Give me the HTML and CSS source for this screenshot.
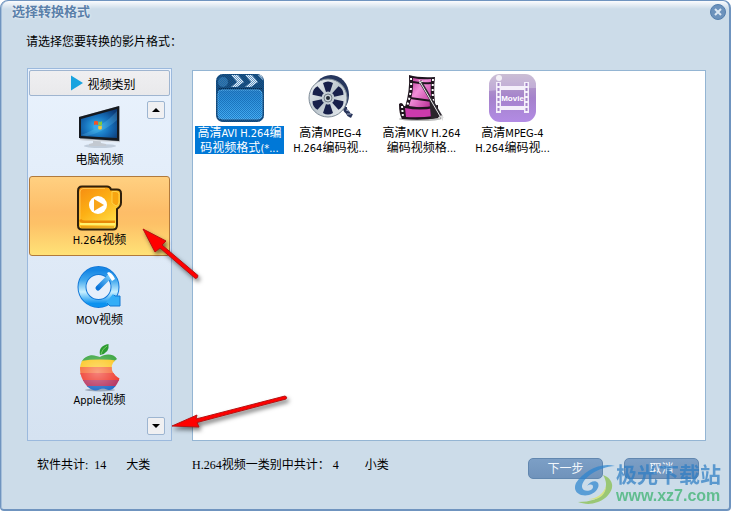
FILE: index.html
```html
<!DOCTYPE html>
<html lang="zh-CN">
<head>
    <meta charset="UTF-8">
    <meta name="viewport" content="width=device-width, initial-scale=1.0">
    <title>选择转换格式</title>
    <link rel="stylesheet" href="styles.css">
</head>
<body>
<div class="window">
    <header class="titlebar">
        <h1>选择转换格式</h1>
        <button class="close" type="button" aria-label="关闭">
            <svg width="16" height="16" viewBox="0 0 16 16"><circle cx="8" cy="8" r="7.5" fill="#6c92bc" stroke="#557fae"/><path d="M5 5l6 6M11 5l-6 6" stroke="#dbe7f3" stroke-width="2"/></svg>
        </button>
    </header>

    <p class="prompt">请选择您要转换的影片格式：</p>

    <main class="content">
        <!-- Kategori video -->
        <nav class="sidebar">
            <button class="sidebar-head" type="button">
                <svg width="12" height="16" viewBox="0 0 12 16"><path d="M0 0.500L12 8L0 15.500z" fill="#18a3df"/></svg>
                视频类别
            </button>
            <button class="category" type="button">
                <svg width="48" height="48" viewBox="0 0 48 48">
                    <defs>
                        <radialGradient id="screen" cx=".45" cy=".6" r=".7"><stop offset="0" stop-color="#35b5ee"/><stop offset=".5" stop-color="#1772bd"/><stop offset="1" stop-color="#0b3975"/></radialGradient>
                    </defs>
                    <ellipse cx="24" cy="42" rx="16" ry="2" fill="#8d9bad" opacity=".4"/>
                    <path d="M17 34h7l1 5 5 1v2H13v-2l4-1z" fill="#c3c9d1"/>
                    <path d="M3 13L43 2l1 .5V38L4 36z" fill="#9ba2ab"/>
                    <path d="M3 13L43 2V37L3 34z" fill="#15191f"/>
                    <path d="M5 15L41 5v29L5 32z" fill="url(#screen)"/>
                    <path d="M5 31c14-5 26-13 36-24v9C31 25 20 30 11 32z" fill="#7fdcff" opacity=".2"/>
                    <path d="M18 17.500q2-1.500 4 0v3.500q-2-1-4 0z" fill="#f0542a"/>
                    <path d="M22.500 17.500q2 1 3.500-.5v4q-2 1-3.500 0z" fill="#83c83c"/>
                    <path d="M17.500 21.500q2-1 4 0v3.500q-2-1-4 0z" fill="#39a5ef"/>
                    <path d="M22.300 21.700q2 1 3.500-.2v3.500q-2 1-3.500 0z" fill="#fbc933"/>
                    <path d="M4 35.500l40 2.500" stroke="#dfe3e8"/>
                </svg>
                <span>电脑视频</span>
            </button>
            <button class="category selected" type="button">
                <svg width="48" height="48" viewBox="0 0 48 48">
                    <defs>
                        <linearGradient id="folder" x2=".7" y2="1"><stop offset="0" stop-color="#f58a12"/><stop offset=".5" stop-color="#fdb014"/><stop offset="1" stop-color="#ffe04a"/></linearGradient>
                    </defs>
                    <path d="M6 2.500h25q3 0 4 3h6q4 0 4 4v9q0 4-4 6.500v16q0 4.500-4 4.500H6q-4 0-4-4V7q0-4.500 4-4.500z" fill="url(#folder)" stroke="#30200b" stroke-width="2"/>
                    <path d="M36 7.500h4q3 0 3 3v7.500q0 3-3 4l-4-3z" fill="#f7a511" stroke="#fed24a"/>
                    <path d="M4 36q2 2 5 2h30" fill="none" stroke="#e88a08" stroke-width="3"/>
                    <path d="M4 39h35v2H4z" fill="#fff06d"/>
                    <path d="M5 43h33" stroke="#dc8205"/>
                    <path d="M4 35V8q0-3 3-3.500h22" fill="none" stroke="#ffc34c"/>
                    <circle cx="22" cy="21" r="9" fill="#fff"/>
                    <path d="M18 15v12l10-6z" fill="#f9a61a"/>
                </svg>
                <span><span class="latin">H.264</span>视频</span>
            </button>
            <button class="category" type="button">
                <svg width="48" height="48" viewBox="0 0 48 48">
                    <defs>
                        <linearGradient id="quick" x2="0" y2="1"><stop offset="0" stop-color="#1687e5"/><stop offset=".3" stop-color="#43a9ee"/><stop offset=".65" stop-color="#c8f0ff"/><stop offset="1" stop-color="#0b92ef"/></linearGradient>
                        <linearGradient id="hand" x1="0" y1="1" x2="1" y2="0"><stop offset="0" stop-color="#0873d9"/><stop offset="1" stop-color="#6cc2f7"/></linearGradient>
                    </defs>
                    <circle cx="22.500" cy="23" r="16.500" fill="#e6effb" stroke="#1177d8" stroke-width="9"/>
                    <circle cx="22.500" cy="23" r="16.500" fill="none" stroke="url(#quick)" stroke-width="7"/>
                    <path d="M33 35l4-5 2 2h5v10H34l-4-3z" fill="#34aef7"/>
                    <path d="M38 31l1 1h5v10H34l-3-3" fill="none" stroke="#1479d2"/>
                    <path d="M22 24L33 13" stroke="url(#hand)" stroke-width="5" stroke-linecap="round"/>
                    <path d="M31 9l5 8 3-2q-2-5-6-7z" fill="#fff"/>
                </svg>
                <span><span class="latin">MOV</span>视频</span>
            </button>
            <button class="category" type="button">
                <svg width="48" height="48" viewBox="0 0 48 48">
                    <defs>
                        <clipPath id="fruit"><path d="M24 13c5-3.500 14-3.500 17 2-8 5-7 14 2.500 19.500-3 8-7 12-11 11.500-4-1-6-2-10 0-6 2-13-3-17-13C2 24 5 13 14 11.500c4-.7 7 1 10 1.500z"/></clipPath>
                        <radialGradient id="gloss" cx=".45" cy=".5" r=".6"><stop offset="0" stop-color="#fff" stop-opacity=".4"/><stop offset="1" stop-color="#fff" stop-opacity="0"/></radialGradient>
                    </defs>
                    <ellipse cx="24" cy="46" rx="15" ry="1.500" fill="#5e6b82" opacity=".5"/>
                    <g clip-path="url(#fruit)">
                        <path d="M0 8h48v10H0z" fill="#36a33c"/>
                        <path d="M0 17.500q24-4 48 0v8H0z" fill="#fcc51b"/>
                        <path d="M0 23h48v8H0z" fill="#f6602a"/>
                        <path d="M0 29h48v8H0z" fill="#ee3022"/>
                        <path d="M0 36h48v7H0z" fill="#b32b58"/>
                        <path d="M0 42h48v6H0z" fill="#1864c4"/>
                        <path d="M0 8h48v40H0z" fill="url(#gloss)"/>
                    </g>
                    <path d="M24 11Q22 2 32.500 0Q34 9 24 11z" fill="#2c9b32"/>
                    <path d="M25 10q1-5 6-8" fill="none" stroke="#77ca64"/>
                </svg>
                <span><span class="latin">Apple</span>视频</span>
            </button>
            <button class="scroll scroll-up" type="button" aria-label="向上"><svg width="8" height="4" viewBox="0 0 8 4"><path d="M0 4h8L4 0z"/></svg></button>
            <button class="scroll scroll-down" type="button" aria-label="向下"><svg width="8" height="4" viewBox="0 0 8 4"><path d="M0 0h8L4 4z"/></svg></button>
        </nav>

        <!-- Daftar format -->
        <section class="formats">
            <button class="format selected" type="button">
                <svg width="50" height="50" viewBox="0 0 50 50">
                    <defs>
                        <linearGradient id="clap" x2="0" y2="1"><stop offset="0" stop-color="#2e86cc"/><stop offset=".3" stop-color="#2d8fd8"/><stop offset="1" stop-color="#46b0f5"/></linearGradient>
                        <pattern id="dots" width="2" height="2" patternUnits="userSpaceOnUse"><path d="M0 0h1v1H0zM1 1h1v1H1z" fill="#0b5ea8" opacity=".6"/></pattern>
                        <clipPath id="clapbar"><rect x="2" y="1" width="46" height="15" rx="6"/></clipPath>
                    </defs>
                    <rect x="1" y="1" width="48" height="48" rx="7" fill="#1a466f"/>
                    <rect x="3" y="17" width="44" height="29" rx="4" fill="url(#clap)" stroke="#5db4ed"/>
                    <g clip-path="url(#clapbar)" fill="#e4eef6">
                        <path d="M16 2h7l6 7-7 5h-6l6-5zM30 2h7l6 7-7 5h-6l6-5zM43 2h5v5z"/>
                        <circle cx="8" cy="9" r="5" fill="#3a77a8"/>
                    </g>
                    <path d="M3 15.500h44" stroke="#0b2b49"/>
                    <rect x="1" y="1" width="48" height="48" rx="7" fill="url(#dots)"/>
                </svg>
                <span class="name">高清<span class="latin">AVI H.264</span>编<br>码视频格式<span class="latin">(*...</span></span>
            </button>
            <button class="format" type="button">
                <svg width="50" height="50" viewBox="0 0 50 50">
                    <defs>
                        <linearGradient id="reel" x2="1" y2="1"><stop offset="0" stop-color="#f4f7f9"/><stop offset=".5" stop-color="#bcc6cd"/><stop offset="1" stop-color="#eef2f5"/></linearGradient>
                    </defs>
                    <path d="M39 34c0 6 2 3 3 6s2 2 4 3" fill="none" stroke="#28345a" stroke-width="4"/>
                    <path d="M40 37l3 1M41 41l4 0" stroke="#9aa6c0"/>
                    <ellipse cx="25" cy="22" rx="18" ry="20" fill="#26365d"/>
                    <circle cx="22" cy="25" r="19" fill="url(#reel)" stroke="#7d8a96"/>
                    <g fill="#18204a">
                        <path id="hole" d="M17 10q5-3 10 0l-3 9q-2-1-4 0z"/>
                        <use href="#hole" transform="rotate(60 22 25)"/>
                        <use href="#hole" transform="rotate(120 22 25)"/>
                        <use href="#hole" transform="rotate(180 22 25)"/>
                        <use href="#hole" transform="rotate(240 22 25)"/>
                        <use href="#hole" transform="rotate(300 22 25)"/>
                    </g>
                    <circle cx="22" cy="25" r="4" fill="#cbd3d9" stroke="#707b86"/>
                    <circle cx="22" cy="25" r="2" fill="#222a36"/>
                </svg>
                <span class="name">高清<span class="latin">MPEG-4</span><br><span class="latin">H.264</span>编码视<span class="latin">...</span></span>
            </button>
            <button class="format" type="button">
                <svg width="50" height="50" viewBox="0 0 50 50">
                    <defs>
                        <linearGradient id="pink" x2="1" y2="1"><stop offset="0" stop-color="#b5308f"/><stop offset=".4" stop-color="#f08fd8"/><stop offset="1" stop-color="#b5228f"/></linearGradient>
                    </defs>
                    <ellipse cx="23" cy="46" rx="21" ry="2" fill="#777" opacity=".5"/>
                    <path d="M12 2q10 3 26 2-2 14 1 34L8 34q5-16 4-32z" fill="#1f141e"/>
                    <path d="M16 5q8 2 18 1-1 13 1 30l-23-3q5-14 4-28z" fill="url(#pink)"/>
                    <path d="M16 9q10 2 18 1M13 25l22 3" fill="none" stroke="#1f141e" stroke-width="2"/>
                    <path d="M14 5q1 14-4 28M36 6q-1 15 1 30" fill="none" stroke="#fff" stroke-width="2" stroke-dasharray="2 3"/>
                    <path d="M2 31q3-3 5 2 15 3 34-1v13q-16 3-36 1-3-5-3-15z" fill="#1f141e"/>
                    <path d="M8 35q15 3 29 0v8q-14 2-28 1z" fill="#cc3aac"/>
                    <path d="M5 33l1 11M39 34v10" stroke="#fff" stroke-width="2" stroke-dasharray="2 2"/>
                    <path d="M32 22l11 22-9 2z" fill="#2b242b"/>
                    <path d="M23 8l22 37" stroke="#302b33" stroke-width="3"/>
                    <path d="M22 7l21 36M22 10l4-2" stroke="#eee"/>
                    <path d="M42 43l4 5v-6z" fill="#ddd"/>
                </svg>
                <span class="name">高清<span class="latin">MKV H.264</span><br>编码视频格<span class="latin">...</span></span>
            </button>
            <button class="format" type="button">
                <svg width="50" height="50" viewBox="0 0 50 50">
                    <defs>
                        <linearGradient id="movie" x2="0" y2="1"><stop offset="0" stop-color="#b9a8c6"/><stop offset=".5" stop-color="#a582cc"/><stop offset="1" stop-color="#b28be4"/></linearGradient>
                    </defs>
                    <rect x="1" y="1" width="47" height="48" rx="11" fill="url(#movie)"/>
                    <path d="M1 18V12Q1 1 12 1h25q11 0 11 11v3Q25 15 1 18z" fill="#fff" opacity=".25"/>
                    <path d="M8 9h5v31H8zM36 9h5v31h-5zM13 13h23v4H13zM13 33h23v4H13z" fill="#f4effa"/>
                    <path d="M10.500 10v29M38.500 10v29" stroke="#a384c8" stroke-width="2" stroke-dasharray="3 2"/>
                    <text x="24.500" y="28" text-anchor="middle" class="movie-text">Movie</text>
                    <circle cx="11" cy="5" r="3" fill="#fff" opacity=".8"/>
                </svg>
                <span class="name">高清<span class="latin">MPEG-4</span><br><span class="latin">H.264</span>编码视<span class="latin">...</span></span>
            </button>
        </section>
    </main>

    <footer class="footer">
        <div class="total">
            <span>软件共计:&nbsp; 14</span>
            <span>大类</span>
        </div>
        <div class="subtotal">
            <span>H.264视频一类别中共计： 4</span>
            <span>小类</span>
        </div>
        <div class="actions">
            <button type="button">下一步</button>
            <button type="button">取消</button>
        </div>
    </footer>

    <div class="watermark">
        <svg width="42" height="42" viewBox="0 0 42 42">
            <path d="M41 3C25-1 9 9 2 20c-4 9 4 14 13 12 7-2 11-8 9-12-2-3-8-2-11 3 3-2 6-2 6 1 0 4-10 6-11 0C8 15 24 4 41 3z" fill="#2b84cf"/>
            <path d="M29 12c16 6 9 22-5 27-8 3-14 2-20 0 12 0 23-3 27-12 2-6 1-10-2-15z" fill="#86bf45"/>
            <path d="M14 36c9 0 16-6 18-13 0 9-8 15-18 13z" fill="#dce85a"/>
        </svg>
        <div>
            <div class="mark-name">极光下载站</div>
            <div class="mark-url">www.xz7.com</div>
        </div>
    </div>

    <!-- Panah penunjuk -->
    <svg class="arrows" width="300" height="440" viewBox="0 0 300 440">
        <g fill="#f00" stroke="#b51212">
            <path d="M143 229L166 241L162 245L198 275.500Q198 278 195.500 278.500L160 248L155 252z"/>
            <path d="M172 426L197 415L196 419L285 396Q288 397 286 399L197 422.500L199 427z"/>
        </g>
    </svg>
</div>
</body>
</html>
```
FILE: styles.css
```css
* {
    box-sizing: border-box;
}
body {
    margin: 0;
    background: #fff;
    font-family: "Liberation Sans", "Noto Sans CJK SC", sans-serif;
    font-size: 12px;
    color: #000;
}
button {
    padding: 0;
    border: 0;
    background: none;
    font: inherit;
    color: inherit;
}
svg {
    display: block;
    flex-shrink: 0;
}
.window {
    position: relative;
    display: flex;
    flex-direction: column;
    min-height: 100vh;
    border: 1px solid #6f94bf;
    border-right-width: 2px;
    border-bottom-width: 2px;
    border-radius: 8px 8px 4px 4px;
    background: linear-gradient(#fbfcfe 0, #ccdce9 8px);
    box-shadow: inset 1px 0 #a5bfda;
}
.titlebar {
    display: flex;
    justify-content: space-between;
    height: 24px;
    padding: 3px 3px 0 11px;
}
.titlebar h1 {
    margin: 0;
    font-size: 13px;
    line-height: 16px;
    color: #5a80aa;
    text-shadow: 0 0 3px #fff;
}
.close {
    width: 16px;
    height: 16px;
}
.prompt {
    margin: 8px 25px 17px;
    line-height: 18px;
}
.content {
    display: flex;
    flex: 1;
    gap: 20px;
    padding: 0 23px 0 26px;
}
.sidebar {
    position: relative;
    flex: 0 0 145px;
    padding: 1px;
    border: 1px solid #9bb9dd;
    background: linear-gradient(#e9f2fd, #d5e2f1);
}
.sidebar-head {
    display: flex;
    align-items: center;
    justify-content: center;
    gap: 4px;
    width: 100%;
    height: 26px;
    padding-left: 8px;
    border: 1px solid #9fb5d0;
    border-radius: 2px;
    background: linear-gradient(#efeff1, #e9e9eb);
}
.category {
    display: flex;
    flex-direction: column;
    align-items: center;
    width: 100%;
    height: 80px;
    padding-top: 7px;
    border: 1px solid transparent;
    border-radius: 3px;
    line-height: 16px;
}
.category.selected {
    border-color: #b17a3c;
    background: linear-gradient(#ffd081, #fdbd68 45%, #fdc167 60%, #ffe277);
}
.latin {
    font-family: "DejaVu Sans Condensed", "DejaVu Sans", sans-serif;
    font-size: 11px;
}
.scroll {
    position: absolute;
    right: 6px;
    display: flex;
    align-items: center;
    justify-content: center;
    width: 18px;
    height: 18px;
    border: 1px solid #9db5d1;
    border-radius: 2px;
    background: #f0f0f2;
}
.scroll-up {
    top: 32px;
}
.scroll-down {
    bottom: 5px;
}
.formats {
    display: flex;
    flex: 1;
    flex-wrap: wrap;
    align-content: flex-start;
    gap: 2px;
    margin-top: 2px;
    padding: 2px;
    border: 1px solid #94b5d3;
    background: #fff;
}
.format {
    display: flex;
    flex-direction: column;
    align-items: center;
    gap: 3px;
    width: 89px;
}
.name {
    width: 100%;
    height: 28px;
    line-height: 14px;
    white-space: nowrap;
}
.format.selected .name {
    background: #0078d7;
    color: #fff;
}
.movie-text {
    font: bold 8px "Liberation Sans", sans-serif;
    fill: #fff;
}
.footer {
    display: flex;
    height: 68px;
    padding: 15px 30px 0 36px;
    font-family: "Liberation Serif", "Noto Sans CJK SC", serif;
    line-height: 18px;
}
.total {
    display: flex;
    gap: 20px;
    width: 155px;
}
.subtotal {
    display: flex;
    gap: 26px;
}
.actions {
    display: flex;
    gap: 21px;
    margin-left: auto;
    padding-top: 2px;
}
.actions button {
    width: 75px;
    height: 21px;
    border: 1px solid #6187af;
    border-radius: 5px;
    background: linear-gradient(#7c9fc6, #7093bb);
    color: #f2f7fc;
}
/* watermark di atas tombol */
.watermark {
    position: absolute;
    right: 8px;
    bottom: 4px;
    display: flex;
    align-items: center;
    opacity: 0.7;
    pointer-events: none;
}
.mark-name {
    font-size: 21px;
    font-weight: bold;
    line-height: 24px;
    color: #2b7cc4;
}
.mark-url {
    font-size: 16px;
    font-weight: bold;
    line-height: 18px;
    color: #35b06a;
}
.arrows {
    position: absolute;
    top: -1px;
    left: -1px;
    pointer-events: none;
    filter: drop-shadow(2px 3px 2px rgba(0, 0, 0, 0.5));
}
```
